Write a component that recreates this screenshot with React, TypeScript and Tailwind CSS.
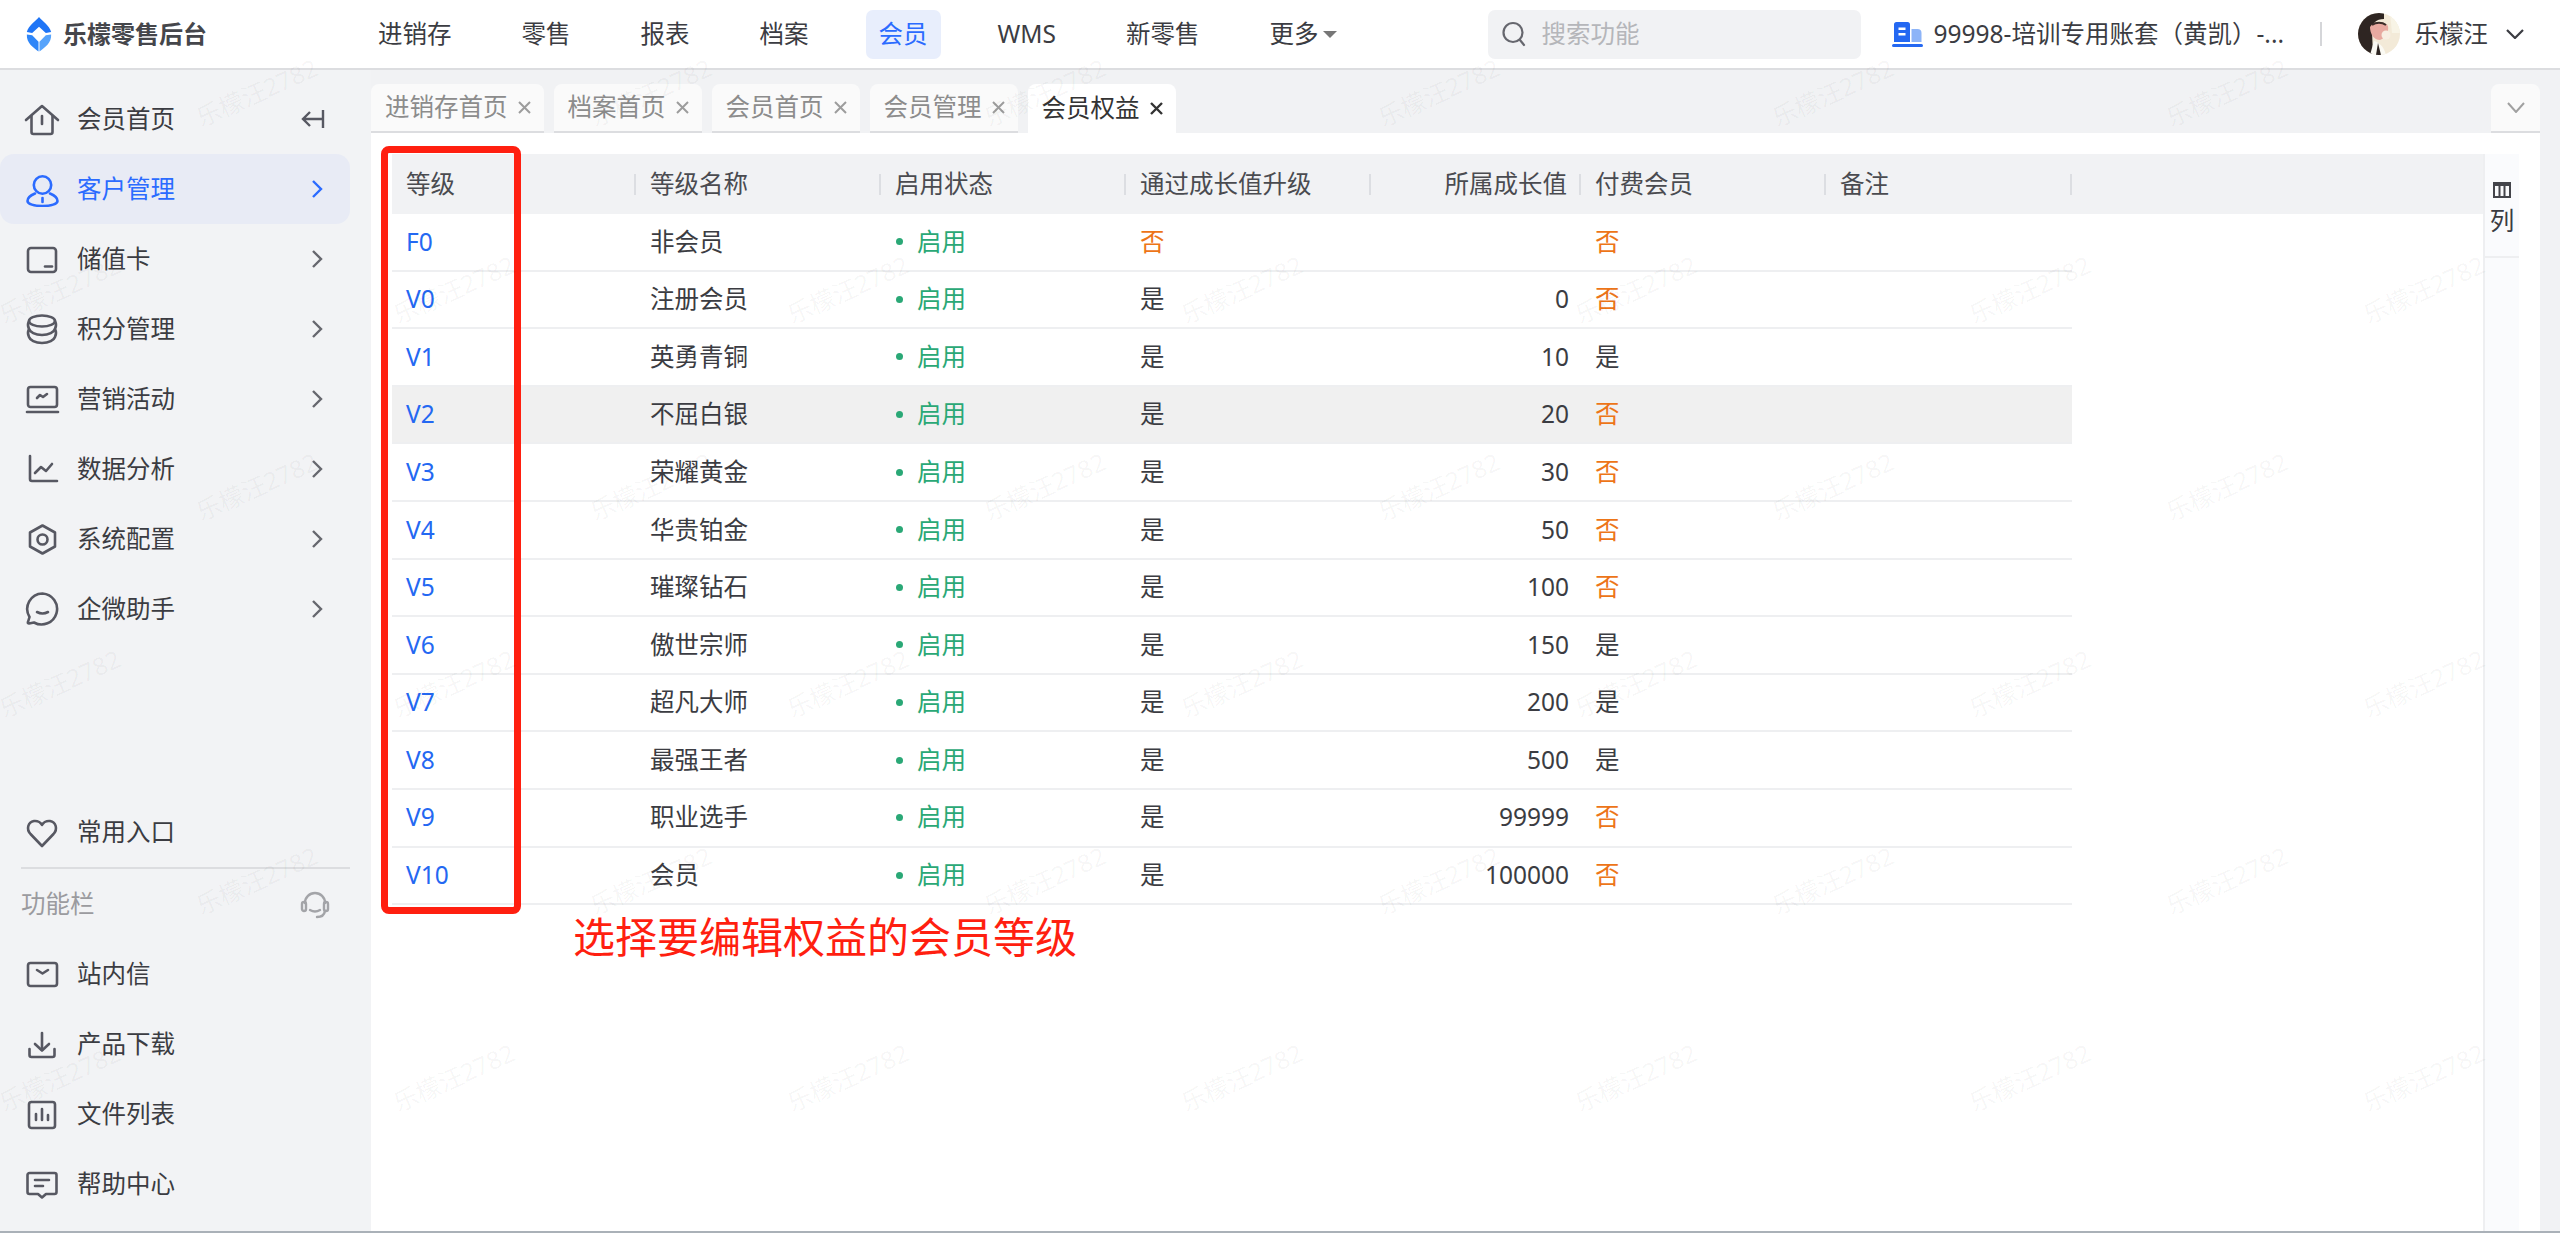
import type { ReactNode } from 'react'

const navItems = ['进销存', '零售', '报表', '档案', '会员', 'WMS', '新零售']
const tabs = ['进销存首页', '档案首页', '会员首页', '会员管理', '会员权益']

type Level = {
  code: string
  name: string
  upgrade: boolean
  growth: string
  paid: boolean
}

const levels: Level[] = [
  { code: 'F0', name: '非会员', upgrade: false, growth: '', paid: false },
  { code: 'V0', name: '注册会员', upgrade: true, growth: '0', paid: false },
  { code: 'V1', name: '英勇青铜', upgrade: true, growth: '10', paid: true },
  { code: 'V2', name: '不屈白银', upgrade: true, growth: '20', paid: false },
  { code: 'V3', name: '荣耀黄金', upgrade: true, growth: '30', paid: false },
  { code: 'V4', name: '华贵铂金', upgrade: true, growth: '50', paid: false },
  { code: 'V5', name: '璀璨钻石', upgrade: true, growth: '100', paid: false },
  { code: 'V6', name: '傲世宗师', upgrade: true, growth: '150', paid: true },
  { code: 'V7', name: '超凡大师', upgrade: true, growth: '200', paid: true },
  { code: 'V8', name: '最强王者', upgrade: true, growth: '500', paid: true },
  { code: 'V9', name: '职业选手', upgrade: true, growth: '99999', paid: false },
  { code: 'V10', name: '会员', upgrade: true, growth: '100000', paid: false },
]

const columns = 'grid grid-cols-[244px_245px_245px_245px_210px_245px_246px]'

function Icon({ children, className = '' }: { children: ReactNode; className?: string }) {
  return (
    <svg
      viewBox="0 0 36 36"
      fill="none"
      stroke="currentColor"
      strokeWidth="2.6"
      strokeLinecap="round"
      strokeLinejoin="round"
      className={`h-9 w-9 shrink-0 ${className}`}
    >
      {children}
    </svg>
  )
}

const icons = {
  home: (
    <>
      <path d="M2 19 18 5l16 14" />
      <path d="M7.5 15v16a2 2 0 0 0 2 2h17a2 2 0 0 0 2-2V15" />
      <path d="M18 15v8" />
    </>
  ),
  user: (
    <>
      <circle cx="18.5" cy="14" r="8.7" />
      <path d="M11 22.5C6 24.500 3.500 27.500 3.500 30c0 3 6.500 5 15 5s15-2 15-5c0-2.500-2.500-5.500-7.500-7.500" />
      <path d="M18.500 27v4" />
    </>
  ),
  card: (
    <>
      <rect x="4" y="7" width="28" height="24" rx="3" />
      <path d="M21 25.500h7" />
    </>
  ),
  database: (
    <>
      <ellipse cx="18" cy="10" rx="13" ry="5.500" />
      <path d="M5 10c-1.500 3-1 6 0 8 1 3 6 6 13 6s12-3 13-6c1-2 1.500-5 0-8" />
      <path d="M5 18c-1.500 3-1 6 0 8 1 3 6 6 13 6s12-3 13-6c1-2 1.500-5 0-8" />
    </>
  ),
  monitor: (
    <>
      <rect x="4" y="6" width="29" height="20" rx="2.500" />
      <path d="M3 31h31" />
      <path d="m13 17 3-3 3 2 4-3" />
    </>
  ),
  chart: (
    <>
      <path d="M6 5v23a2 2 0 0 0 2 2h25" />
      <path d="m11 22 6-6 5 4 6-7" />
    </>
  ),
  hexagon: (
    <>
      <path d="M18.500 4.500 31 11.500v14l-12.500 7-12.500-7v-14z" />
      <circle cx="18.500" cy="18.500" r="5" />
    </>
  ),
  chat: (
    <>
      <path d="M18.500 2.500A15.500 15.500 0 1 1 10 31.500l-5 1q-1.500 0-1-1.500l1.500-5a15.500 15.500 0 0 1 13-23.500z" />
      <path d="M13 21q5.500 3 11 0" />
    </>
  ),
  heart: <path d="M18 32 6.500 20C2 15 4 8 10 7c4-.5 7 2 8 4 1-2 4-4.500 8-4 6 1 8 8 3.500 13z" />,
  mail: (
    <>
      <rect x="4" y="7" width="29" height="23" rx="2.500" />
      <path d="m13 14 5.500 3.500L24 14" />
    </>
  ),
  download: (
    <>
      <path d="M18 7v17" />
      <path d="m11 18 7 6.500 7-6.500" />
      <path d="M5.500 23v6a2 2 0 0 0 2 2h21a2 2 0 0 0 2-2v-6" />
    </>
  ),
  bars: (
    <>
      <rect x="5" y="6" width="26" height="26" rx="2.500" />
      <path d="M12 24v-6M18 24V13M24 24v-5" />
    </>
  ),
  message: (
    <>
      <path d="M5.500 7h25a2 2 0 0 1 2 2v17a2 2 0 0 1-2 2H22l-4 3.500-4-3.500H5.500a2 2 0 0 1-2-2V9a2 2 0 0 1 2-2z" />
      <path d="M11 14h14M11 20h8" />
    </>
  ),
}

function Chevron() {
  return (
    <svg viewBox="0 0 12 20" fill="none" stroke="currentColor" strokeWidth="2.4" className="h-5 w-3 shrink-0">
      <path d="m2 2 8 8-8 8" />
    </svg>
  )
}

function MenuItem({
  icon,
  label,
  active,
  arrow,
}: {
  icon: ReactNode
  label: string
  active?: boolean
  arrow?: boolean
}) {
  return (
    <div
      className={`flex h-[70px] w-[350px] items-center rounded-[14px] pl-[24px] pr-[27px] ${
        active ? 'bg-[#e8ebf5] text-[#2b6bff]' : 'text-[#3b3c42]'
      }`}
    >
      <Icon className={active ? 'text-[#2b6bff]' : 'text-[#575862]'}>{icon}</Icon>
      <span className="ml-[17px]">{label}</span>
      {arrow && (
        <span className={`ml-auto ${active ? 'text-[#2b6bff]' : 'text-[#66676e]'}`}>
          <Chevron />
        </span>
      )}
    </div>
  )
}

function Sidebar() {
  return (
    <aside className="flex w-[371px] shrink-0 flex-col bg-[#f2f3f5] pb-[12px] pt-[14px]">
      <div className="flex h-[70px] w-[350px] items-center pl-[24px] pr-[25px] text-[#3b3c42]">
        <Icon className="text-[#575862]">{icons.home}</Icon>
        <span className="ml-[17px]">会员首页</span>
        <svg viewBox="0 0 24 20" fill="none" stroke="#575862" strokeWidth="2.4" className="ml-auto h-5 w-6">
          <path d="M22 1v18M2 10h19M9 3l-7 7 7 7" />
        </svg>
      </div>
      <MenuItem icon={icons.user} label="客户管理" active arrow />
      <MenuItem icon={icons.card} label="储值卡" arrow />
      <MenuItem icon={icons.database} label="积分管理" arrow />
      <MenuItem icon={icons.monitor} label="营销活动" arrow />
      <MenuItem icon={icons.chart} label="数据分析" arrow />
      <MenuItem icon={icons.hexagon} label="系统配置" arrow />
      <MenuItem icon={icons.chat} label="企微助手" arrow />

      <div className="mt-auto">
        <MenuItem icon={icons.heart} label="常用入口" />
        <div className="ml-[21px] h-[2px] w-[329px] bg-[#dcdde0]" />
        <div className="flex h-[70px] w-[350px] items-center justify-between pl-[21px] pr-[20px] text-[#9b9b9f]">
          <span>功能栏</span>
          <svg viewBox="0 0 30 30" fill="none" stroke="#a3a4a8" strokeWidth="2.4" strokeLinecap="round" className="h-[30px] w-[30px]">
            <path d="M5 14a10 10 0 0 1 20 0" />
            <rect x="2" y="13" width="4" height="9" rx="2" />
            <rect x="24" y="13" width="4" height="9" rx="2" />
            <path d="M10 21q5 3 10 0" />
            <path d="M25 22q-1 6-8 6" />
          </svg>
        </div>
        <MenuItem icon={icons.mail} label="站内信" />
        <MenuItem icon={icons.download} label="产品下载" />
        <MenuItem icon={icons.bars} label="文件列表" />
        <MenuItem icon={icons.message} label="帮助中心" />
      </div>
    </aside>
  )
}

function Logo() {
  return (
    <svg viewBox="0 0 26 36" className="h-[35px] w-[26px] shrink-0">
      <path d="M13 0c3 4 11 9 12.500 15.500L20 16.500 13 10l-7 6.500-5.500-1C2 9 10 4 13 0z" fill="#1f75f6" />
      <path d="M.5 18 6 18.800l6.500 6.700V35.500C7 31 0 27 .5 18z" fill="#2f86f8" />
      <path d="M25.500 18 20 18.800l-6.500 6.700V35.500C19 31 26 27 25.500 18z" fill="#56a3fb" />
    </svg>
  )
}

function Avatar() {
  return (
    <svg viewBox="0 0 42 42" className="h-[42px] w-[42px] shrink-0">
      <defs>
        <clipPath id="avatar-clip">
          <circle cx="21" cy="21" r="21" />
        </clipPath>
      </defs>
      <g clipPath="url(#avatar-clip)">
        <rect width="42" height="42" fill="#f3ead8" />
        <path d="M0 0h26v6c-8 0-12 4-12 12l1 24H0z" fill="#2e2522" />
        <path d="M12 14c4-6 14-6 18-1 1 6-2 12-8 14-6 0-10-6-10-13z" fill="#e8a9a0" />
        <path d="M14 12c4-3 10-3 14 0" stroke="#3b2c28" strokeWidth="2" fill="none" />
        <path d="M16 28c6 2 10 6 12 14H12z" fill="#fbfaf4" />
        <path d="M20 30l3 12h-5z" fill="#2e2522" />
        <circle cx="28" cy="22" r="4.500" fill="#f8eee2" />
        <path d="M32 0h10v20H34z" fill="#f8f4e6" />
      </g>
    </svg>
  )
}

function Header() {
  return (
    <header className="flex h-[70px] shrink-0 items-center border-b-2 border-[#dcdde0] bg-white text-[#3b3c42]">
      <div className="flex w-[365px] shrink-0 items-center pl-[26px]">
        <Logo />
        <span className="ml-[11px] text-[24px] font-bold text-[#45464b]">乐檬零售后台</span>
      </div>
      <nav className="flex items-center gap-[44px]">
        {navItems.map((item) => (
          <span
            key={item}
            className={`flex h-[49px] items-center rounded-[7px] px-[13px] ${
              item === '会员' ? 'bg-[#e8eefc] text-[#2b6bff]' : ''
            }`}
          >
            {item}
          </span>
        ))}
        <span className="flex h-[49px] items-center pl-[13px]">
          更多
          <span className="ml-[5px] h-0 w-0 border-x-[7px] border-t-[7px] border-x-transparent border-t-[#777]" />
        </span>
      </nav>
      <div className="ml-auto flex h-[49px] w-[373px] items-center rounded-[7px] bg-[#f1f2f4] pl-[13px] text-[#b5b6ba]">
        <svg viewBox="0 0 26 26" fill="none" stroke="#66676e" strokeWidth="2.2" strokeLinecap="round" className="h-[26px] w-[26px]">
          <circle cx="12" cy="11.500" r="9.500" />
          <path d="m19 19 4 5" />
        </svg>
        <span className="ml-[15px]">搜索功能</span>
      </div>
      <svg viewBox="0 0 31 25" className="ml-[31px] h-[25px] w-[31px] shrink-0">
        <path d="M2 2.500A2.500 2.500 0 0 1 4.500 0h11A2.500 2.500 0 0 1 18 2.500V20H2z" fill="#2468f2" />
        <path d="M19.500 7h6a4 4 0 0 1 4 4v9h-10z" fill="#8db4f8" />
        <rect x="6.500" y="5.500" width="7" height="2.500" fill="#fff" />
        <rect x="6.500" y="11" width="7" height="2.500" fill="#fff" />
        <rect x="0" y="22" width="31" height="3" rx="1.500" fill="#2468f2" />
      </svg>
      <span className="ml-[11px] w-[386px] shrink-0 whitespace-nowrap">99998-培训专用账套（黄凯）-...</span>
      <span className="h-[24px] w-[2px] shrink-0 bg-[#d5d6d9]" />
      <span className="ml-[36px]">
        <Avatar />
      </span>
      <span className="ml-[15px]">乐檬汪</span>
      <svg viewBox="0 0 18 10" fill="none" stroke="#3b3c42" strokeWidth="2.2" className="ml-[18px] mr-[36px] h-[10px] w-[18px] shrink-0">
        <path d="m1 1 8 8 8-8" />
      </svg>
    </header>
  )
}

function CloseMark({ active }: { active: boolean }) {
  return (
    <svg
      viewBox="0 0 13 13"
      fill="none"
      stroke={active ? '#333' : '#9c9c9c'}
      strokeWidth={active ? 2.4 : 2}
      className="h-[13px] w-[13px] shrink-0"
    >
      <path d="m1 1 11 11M12 1 1 12" />
    </svg>
  )
}

function TabBar() {
  return (
    <div className="flex h-[63px] shrink-0 items-end gap-[10px] bg-[#f1f2f4] pr-[20px]">
      {tabs.map((tab) => {
        const active = tab === '会员权益'
        return (
          <div
            key={tab}
            className={`flex h-[49px] items-center gap-[10px] rounded-t-[8px] pl-[14px] pr-[13px] ${
              active ? 'bg-white text-[#333]' : 'border-b-2 border-[#dcdde0] bg-[#fafafa] text-[#8c8c8c]'
            }`}
          >
            {tab}
            <CloseMark active={active} />
          </div>
        )
      })}
      <div className="ml-auto flex h-[49px] w-[49px] items-center justify-center rounded-t-[8px] border-b-2 border-[#dcdde0] bg-[#fafafa]">
        <svg viewBox="0 0 18 11" fill="none" stroke="#a0a0a0" strokeWidth="2" className="h-[11px] w-[18px]">
          <path d="m1 1 8 9 8-9" />
        </svg>
      </div>
    </div>
  )
}

function HeaderCell({ label, right }: { label: string; right?: boolean }) {
  return (
    <div className="flex items-center text-[#4a4b50]">
      <span className={right ? 'ml-auto pr-[12px]' : 'pl-[14px]'}>{label}</span>
      <span className={`h-[21px] w-[2px] bg-[#dcdee2] ${right ? '' : 'ml-auto'}`} />
    </div>
  )
}

function YesNo({ value }: { value: boolean }) {
  return <span className={value ? 'text-[#3b3c42]' : 'text-[#ed7518]'}>{value ? '是' : '否'}</span>
}

function LevelTable() {
  return (
    <div className="relative">
      <div className="h-[60px] bg-[#f1f2f4]">
        <div className={`${columns} h-full w-[1680px]`}>
          <HeaderCell label="等级" />
          <HeaderCell label="等级名称" />
          <HeaderCell label="启用状态" />
          <HeaderCell label="通过成长值升级" />
          <HeaderCell label="所属成长值" right />
          <HeaderCell label="付费会员" />
          <HeaderCell label="备注" />
        </div>
      </div>
      {levels.map((level) => (
        <div
          key={level.code}
          className={`${columns} h-[57.6px] w-[1680px] items-center border-b-2 border-[#eeeff1] text-[#3b3c42] ${
            level.code === 'V2' ? 'bg-[#f0f0f0]' : ''
          }`}
        >
          <span className="pl-[14px] text-[#2468f2]">{level.code}</span>
          <span className="pl-[14px]">{level.name}</span>
          <span className="flex items-center gap-[14px] pl-[15px] text-[#2aa876]">
            <span className="h-[7px] w-[7px] rounded-full bg-[#2aa876]" />
            启用
          </span>
          <span className="pl-[14px]">
            <YesNo value={level.upgrade} />
          </span>
          <span className="pr-[12px] text-right">{level.growth}</span>
          <span className="pl-[14px]">
            <YesNo value={level.paid} />
          </span>
          <span />
        </div>
      ))}

      {/* annotation drawn over the table */}
      <div className="absolute left-[-11px] top-[-8px] h-[768px] w-[140px] rounded-[8px] border-[7px] border-[#ff1f10]" />
      <div className="absolute left-[181px] top-[758px] whitespace-nowrap text-[42px] leading-[50px] text-[#ff1f10]">
        选择要编辑权益的会员等级
      </div>
    </div>
  )
}

function ColumnStrip() {
  return (
    <div className="mt-[21px] w-[36px] shrink-0 border-l-2 border-[#eeeff1] bg-[#fafbfd]">
      <div className="flex h-[104px] flex-col items-center border-b-2 border-[#eeeff1] pt-[28px] text-[#3b3c42]">
        <svg viewBox="0 0 18 16" className="h-[16px] w-[18px]">
          <rect x="0" y="0" width="18" height="4" fill="#44454b" />
          <path d="M1 4v11h16V4M6.500 4v11M11.500 4v11" fill="none" stroke="#44454b" strokeWidth="2" />
        </svg>
        <span className="mt-[8px] leading-[30px]">列</span>
      </div>
    </div>
  )
}

function Watermarks() {
  const marks: { x: number; y: number }[] = []
  for (let row = 0; row < 6; row++) {
    for (let col = 0; col < 7; col++) {
      marks.push({ x: (row % 2 ? 60 : 257) + col * 394, y: 93 + row * 197 })
    }
  }
  return (
    <div className="pointer-events-none absolute inset-0 overflow-hidden">
      {marks.map((mark) => (
        <span
          key={`${mark.x}-${mark.y}`}
          className="absolute whitespace-nowrap text-[#000]/[0.045]"
          style={{ left: mark.x, top: mark.y, transform: 'translate(-50%, -50%) rotate(-24deg)' }}
        >
          乐檬汪2782
        </span>
      ))}
    </div>
  )
}

export default function App() {
  return (
    <div className="relative flex h-screen w-full flex-col overflow-hidden border-b-2 border-[#aab1b8] bg-white font-['Noto_Sans','Noto_Sans_CJK_SC',sans-serif] text-[24.5px] leading-none">
      <Header />
      <div className="flex min-h-0 flex-1">
        <Sidebar />
        <main className="flex min-w-0 flex-1 flex-col bg-[#f1f2f4]">
          <TabBar />
          <div className="mr-[20px] flex min-h-0 flex-1 bg-white pr-[21px]">
            <div className="min-w-0 flex-1 pl-[21px] pt-[21px]">
              <LevelTable />
            </div>
            <ColumnStrip />
          </div>
        </main>
      </div>
      <Watermarks />
    </div>
  )
}
